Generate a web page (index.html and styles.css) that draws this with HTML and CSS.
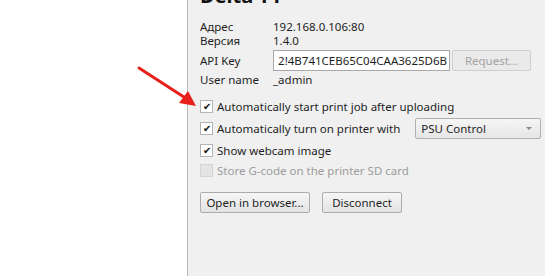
FILE: index.html
```html
<!DOCTYPE html>
<html lang="en">
<head>
    <meta charset="UTF-8">
    <title>Printer settings</title>
    <link rel="stylesheet" href="styles.css">
</head>
<body>
    <div class="window">
        <div class="sidebar">
            <svg class="arrow" width="70" height="50" viewBox="0 0 70 50">
                <line x1="2" y1="2" x2="50" y2="33" stroke="#e8201c" stroke-width="3" stroke-linecap="round"/>
                <polygon points="59,40 42,37 51,25" fill="#e8201c"/>
            </svg>
        </div>
        <div class="panel">
            <h1 class="title">Delta T1</h1>
            <div class="info">
                <span class="label">Адрес</span>
                <span class="value">192.168.0.106:80</span>
                <span class="label">Версия</span>
                <span class="value">1.4.0</span>
                <span class="label key-label">API Key</span>
                <div class="key-row">
                    <div class="key-input"><span>2!4B741CEB65C04CAA3625D6B</span></div>
                    <button class="btn disabled">Request...</button>
                </div>
                <span class="label user">User name</span>
                <span class="value user">_admin</span>
            </div>
            <div class="options">
                <div class="check"><span class="box">✔</span>Automatically start print job after uploading</div>
                <div class="check psu">
                    <span class="box">✔</span>Automatically turn on printer with
                    <div class="combo">PSU Control<span class="caret"></span></div>
                </div>
                <div class="check"><span class="box">✔</span>Show webcam image</div>
                <div class="check off"><span class="box"></span>Store G-code on the printer SD card</div>
            </div>
            <div class="actions">
                <button class="btn open">Open in browser...</button>
                <button class="btn disconnect">Disconnect</button>
            </div>
        </div>
    </div>
</body>
</html>
```

FILE: styles.css
```css
* {
    margin: 0;
    padding: 0;
    box-sizing: border-box;
}

body {
    font-family: 'Noto Sans', sans-serif;
    font-size: 11.5px;
    color: #1e1e1e;
    background-color: #fff;
    width: 545px;
    height: 276px;
    overflow: hidden;
}

.window {
    display: flex;
    height: 276px;
}

.sidebar {
    flex-shrink: 0;
    width: 188px;
    background-color: #fff;
    border-right: 1px solid #b9b9b9;
    position: relative;
}

.arrow {
    position: absolute;
    left: 137px;
    top: 66px;
}

.panel {
    flex: 1;
    min-width: 0;
    background-color: #f0f0f0;
    padding: 0 6px 0 12px;
    white-space: nowrap;
}

.title {
    font-size: 20px;
    font-weight: bold;
    line-height: 20px;
    margin-top: -14px;
    height: 20px;
    color: #111;
}

.info {
    display: grid;
    grid-template-columns: 73px 1fr;
    margin-top: 14px;
    line-height: 14px;
}

.label,
.value {
    height: 14px;
}

.key-label {
    height: 21px;
    line-height: 21px;
    margin-top: 2px;
}

.key-row {
    display: flex;
    gap: 2px;
    height: 21px;
    margin-top: 2px;
}

.key-input {
    display: flex;
    justify-content: flex-end;
    width: 177px;
    height: 21px;
    border: 1px solid #a8a8a8;
    background-color: #fff;
    line-height: 19px;
    padding-right: 2px;
    overflow: hidden;
}

.btn {
    font-family: inherit;
    font-size: 11.5px;
    color: #1e1e1e;
    height: 21px;
    padding: 0 5px;
    border: 1px solid #acacac;
    border-radius: 2px;
    background: linear-gradient(#f6f6f6, #e3e3e3);
}

.btn.disabled {
    width: 79px;
    color: #a3a3a3;
    border-color: #cfcfcf;
    background: #eaeaea;
}

.btn.open {
    width: 110px;
}

.btn.disconnect {
    width: 80px;
}

.info .user {
    margin-top: 2px;
}

.options {
    margin-top: 8px;
    display: flex;
    flex-direction: column;
}

.check {
    display: flex;
    align-items: center;
    height: 22px;
}

.box {
    flex-shrink: 0;
    width: 13px;
    height: 13px;
    border: 1px solid #b4b4b4;
    background-color: #fff;
    font-size: 10px;
    line-height: 11px;
    text-align: center;
    color: #111;
    margin-right: 4px;
}

.check.off {
    color: #9c9c9c;
    height: 20px;
    margin-top: -1px;
}

.check.off .box {
    background-color: #e4e4e4;
    border-color: #d4d4d4;
}

.combo {
    flex-shrink: 0;
    position: relative;
    margin-left: 15px;
    width: 126px;
    height: 21px;
    border: 1px solid #b0b0b0;
    border-radius: 2px;
    background: linear-gradient(#f5f5f5, #e6e6e6);
    line-height: 19px;
    padding-left: 5px;
}

.caret {
    position: absolute;
    right: 8px;
    top: 8px;
    border-left: 3px solid transparent;
    border-right: 3px solid transparent;
    border-top: 3px solid #888;
}

.actions {
    display: flex;
    gap: 12px;
    margin-top: 12px;
}
```
